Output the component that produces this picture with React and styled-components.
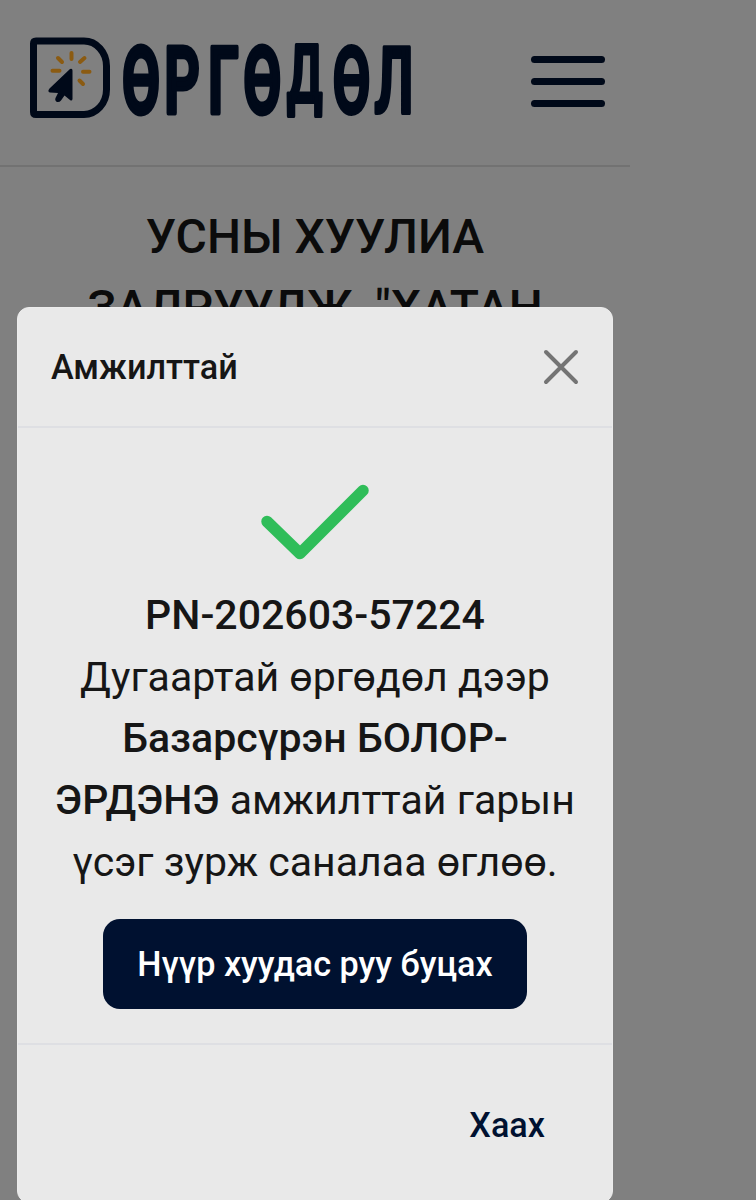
import React from "react";
import styled, { createGlobalStyle } from "styled-components";

const App = () => {
  return (
    <>
      <GlobalStyle />
      <Screen>
        <Page>
          <Header>
            <Logo />
            <MenuButton aria-label="Цэс">
              <MenuLine />
              <MenuLine />
              <MenuLine />
            </MenuButton>
          </Header>
          <PageTitle>
            УСНЫ ХУУЛИА
            <br />
            ЗАЛРУУЛЖ, "ХАТАН
          </PageTitle>
        </Page>
        <Modal role="dialog">
          <ModalHeader>
            <ModalTitle>Амжилттай</ModalTitle>
            <CloseButton aria-label="Хаах">
              <svg width="36" height="36" viewBox="0 0 36 36">
                <path d="M3 3L33 33M33 3L3 33" />
              </svg>
            </CloseButton>
          </ModalHeader>
          <ModalBody>
            <CheckIcon width="108" height="76" viewBox="0 0 108 76">
              <path d="M6 37.500L39 69.500L102 6.500" />
            </CheckIcon>
            <Message>
              <strong>PN-202603-57224</strong>
              <br />
              Дугаартай өргөдөл дээр
              <br />
              <strong>Базарсүрэн БОЛОР-</strong>
              <br />
              <strong>ЭРДЭНЭ</strong> амжилттай гарын
              <br />
              үсэг зурж саналаа өглөө.
            </Message>
            <HomeButton>Нүүр хуудас руу буцах</HomeButton>
          </ModalBody>
          <ModalFooter>
            <TextButton>Хаах</TextButton>
          </ModalFooter>
        </Modal>
      </Screen>
    </>
  );
};

export default App;

const Logo = () => (
  <LogoSvg width="390" height="112" viewBox="0 -12 390 112">
    <path
      d="M7 5H55A22.500 25 0 0 1 77.500 30V53.500A22.500 25 0 0 1 55 78.500H7Q4.500 78.500 4.500 76V7.500Q4.500 5 7 5Z"
      fill="none"
      stroke="#000919"
      strokeWidth="7"
    />
    <path
      d="M43.500 34.500V63Q43 65.500 41 64L35.500 59.500L32 64.500Q30.500 66.500 28 66Q25.500 64.500 26.500 62L29 57L21 56.500Q18 55.500 20.500 52.500L41 33Q43.500 32 43.500 34.500Z"
      fill="#000919"
    />
    <path
      d="M42.500 17V23M29 22L33 26M55.500 22L51 26M23.500 34.700H30.500M54 35.700H60.500M50.500 44.500L54 48"
      fill="none"
      stroke="#8b5b12"
      strokeWidth="4"
      strokeLinecap="round"
    />
    <Wordmark transform="translate(0 76.500) scale(.6 1)" x="155 225.500 298.500 357 430 506 576">
      ӨРГӨ
      <tspan fontSize="79" dy="-11">
        Д
      </tspan>
      <tspan dy="11">ӨЛ</tspan>
    </Wordmark>
  </LogoSvg>
);

const GlobalStyle = createGlobalStyle`
  * {
    box-sizing: border-box;
  }

  body {
    margin: 0;
    background: #808080;
    font-family: Roboto, "Liberation Sans", sans-serif;
  }

  button {
    border: 0;
    padding: 0;
    background: none;
    font-family: inherit;
  }
`;

const Screen = styled.div`
  position: relative;
  width: 756px;
  height: 1200px;
  overflow: hidden;
  background: #808080;
`;

const Page = styled.div`
  width: 630px;
`;

const Header = styled.header`
  display: flex;
  align-items: center;
  justify-content: space-between;
  height: 167px;
  padding: 0 25px 5px 29px;
  border-bottom: 2px solid #727272;
`;

const LogoSvg = styled.svg`
  display: block;
`;

const Wordmark = styled.text`
  font-family: Roboto, "Liberation Sans", sans-serif;
  font-size: 92px;
  font-weight: 600;
  fill: #000919;
  stroke: #000919;
  stroke-width: 4px;
  stroke-linejoin: round;
  vector-effect: non-scaling-stroke;
`;

const MenuButton = styled.button`
  display: flex;
  flex-direction: column;
  gap: 15px;
  width: 74px;
  margin-top: 2px;
`;

const MenuLine = styled.span`
  width: 74px;
  height: 7px;
  border-radius: 4px;
  background: #000919;
`;

const PageTitle = styled.h1`
  margin: 34px 0 0;
  color: #0b0b0b;
  font-size: 48px;
  font-weight: 500;
  line-height: 71.3px;
  text-align: center;
`;

const Modal = styled.section`
  position: absolute;
  top: 307px;
  left: 17px;
  width: 596px;
  height: 896px;
  border-radius: 12px;
  background: #e9e9e9;
  border: 1px solid #ececec;
  color: #161616;
`;

const ModalHeader = styled.div`
  display: flex;
  align-items: center;
  justify-content: space-between;
  height: 120px;
  padding: 0 33px;
  border-bottom: 2px solid #dedfe3;
`;

const ModalTitle = styled.h2`
  margin: 0;
  font-size: 34.2px;
  font-weight: 500;
`;

const CloseButton = styled.button`
  height: 36px;

  svg {
    display: block;
    stroke: #747474;
    stroke-width: 4;
    stroke-linecap: round;
  }
`;

const ModalBody = styled.div`
  display: flex;
  flex-direction: column;
  align-items: center;
  height: 617px;
  padding-top: 56px;
  border-bottom: 2px solid #dedfe3;
`;

const CheckIcon = styled.svg`
  fill: none;
  stroke: #2fbd59;
  stroke-width: 11.5;
  stroke-linecap: round;
  stroke-linejoin: round;
`;

const Message = styled.p`
  margin: 25px 0 0;
  font-size: 41.05px;
  line-height: 61.7px;
  text-align: center;
  white-space: nowrap;

  strong {
    font-weight: 500;
  }
`;

const HomeButton = styled.button`
  width: 424px;
  height: 90px;
  margin-top: 25px;
  border-radius: 17px;
  background: #001130;
  color: #fff;
  font-size: 34.2px;
  font-weight: 500;
`;

const ModalFooter = styled.div`
  display: flex;
  justify-content: flex-end;
  padding: 60px 67px 0;
`;

const TextButton = styled.button`
  color: #001130;
  font-size: 34.2px;
  font-weight: 500;
  line-height: 41px;
`;
